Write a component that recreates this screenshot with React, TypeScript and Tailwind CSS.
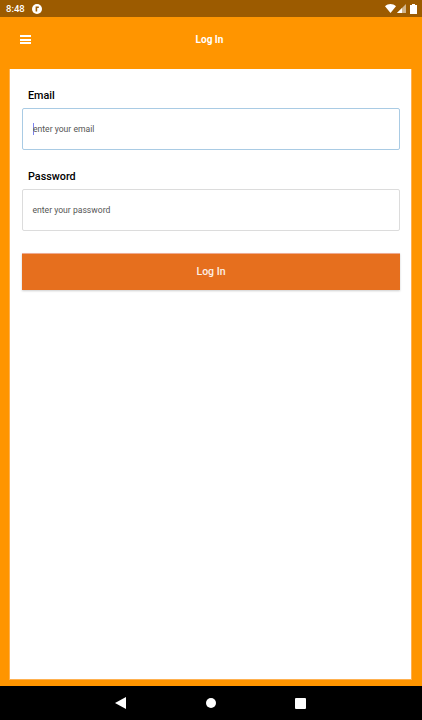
function StatusBar() {
  return (
    <div className="flex h-[17px] shrink-0 items-center justify-between bg-[#9c5b00] pl-[6px] pr-[5px]">
      <div className="flex items-center gap-[7px]">
        <span className="pt-[1px] text-[9.5px] leading-none font-medium text-white">8:48</span>
        <svg width="10" height="10" viewBox="0 0 10 10">
          <circle cx="5" cy="5" r="5" fill="#fff" />
          <path d="M3.6 2.6h3.2v1.5H5.2v3.4H3.6z" fill="#9c5b00" />
        </svg>
      </div>
      <div className="flex items-center">
        <svg width="11" height="9" viewBox="0 0 11 9">
          <path d="M0 2.2C3.2-.6 7.8-.6 11 2.2L5.5 9z" fill="#fff" />
        </svg>
        <svg width="9" height="9" viewBox="0 0 9 9" className="ml-[1px]">
          <path d="M9 0v9H0z" fill="#fff" fillOpacity="0.55" />
          <path d="M5 4v5H0z" fill="#fff" />
        </svg>
        <svg width="7" height="10" viewBox="0 0 7 10" className="ml-[4px]">
          <path d="M2 0h3v1h2v9H0V1h2z" fill="#fff" />
        </svg>
      </div>
    </div>
  );
}

function Header() {
  return (
    <div className="relative flex h-[52px] shrink-0 items-start bg-[#ff9500] pl-[20px] pt-[18px]">
      <div className="flex h-[9px] w-[11px] flex-col justify-between">
        <span className="h-[2px] bg-white" />
        <span className="h-[2px] bg-white" />
        <span className="h-[2px] bg-white" />
      </div>
      <span className="absolute inset-x-0 top-[16px] pr-[3px] text-center text-[10px] leading-[13px] font-bold text-white">
        Log In
      </span>
    </div>
  );
}

type FieldProps = {
  label: string;
  placeholder: string;
  focused?: boolean;
};

function Field({ label, placeholder, focused }: FieldProps) {
  return (
    <div>
      <div className="pl-[6px] text-[10.8px] leading-[13px] font-medium text-black">{label}</div>
      <div
        className={`mt-[6px] flex h-[42px] items-center rounded-[2px] border bg-white pl-[9.5px] ${
          focused ? "border-[#a9cbe4]" : "border-[#dcdcdc]"
        }`}
      >
        {focused && <span className="mr-[-1px] h-[12px] w-[1.5px] bg-[#7b83f0]" />}
        <span className="text-[8.6px] leading-none text-[#555555]">{placeholder}</span>
      </div>
    </div>
  );
}

function NavBar() {
  return (
    <div className="flex h-[34px] shrink-0 items-center justify-center bg-black pr-[2px]">
      <svg width="11" height="12" viewBox="0 0 11 12" className="mr-[80px]">
        <path d="M11 0v12L0 6z" fill="#fff" />
      </svg>
      <span className="mr-[79px] h-[10px] w-[10px] rounded-full bg-white" />
      <span className="h-[11px] w-[11px] rounded-[1px] bg-white" />
    </div>
  );
}

export default function App() {
  return (
    <div className="flex h-[720px] w-[422px] flex-col overflow-hidden bg-[#ff9500] font-['Roboto',sans-serif]">
      <StatusBar />
      <Header />
      <div className="ml-[10px] mr-[11px] flex-1 bg-white pl-[12px] pr-[11px] pt-[20px] shadow-[0_0_0_1px_rgba(255,220,200,0.4)]">
        <div className="flex flex-col gap-[20px]">
          <Field label="Email" placeholder="enter your email" focused />
          <Field label="Password" placeholder="enter your password" />
        </div>
        <button
          type="button"
          className="mt-[22px] flex h-[37px] w-full items-center justify-center border-t border-[#eeaa90] bg-[#e66f1e] text-[10.5px] font-medium text-[#fdf0e6] shadow-[0_1px_2px_rgba(0,0,0,0.2)]"
        >
          Log In
        </button>
      </div>
      <div className="h-[7px] shrink-0" />
      <NavBar />
    </div>
  );
}
